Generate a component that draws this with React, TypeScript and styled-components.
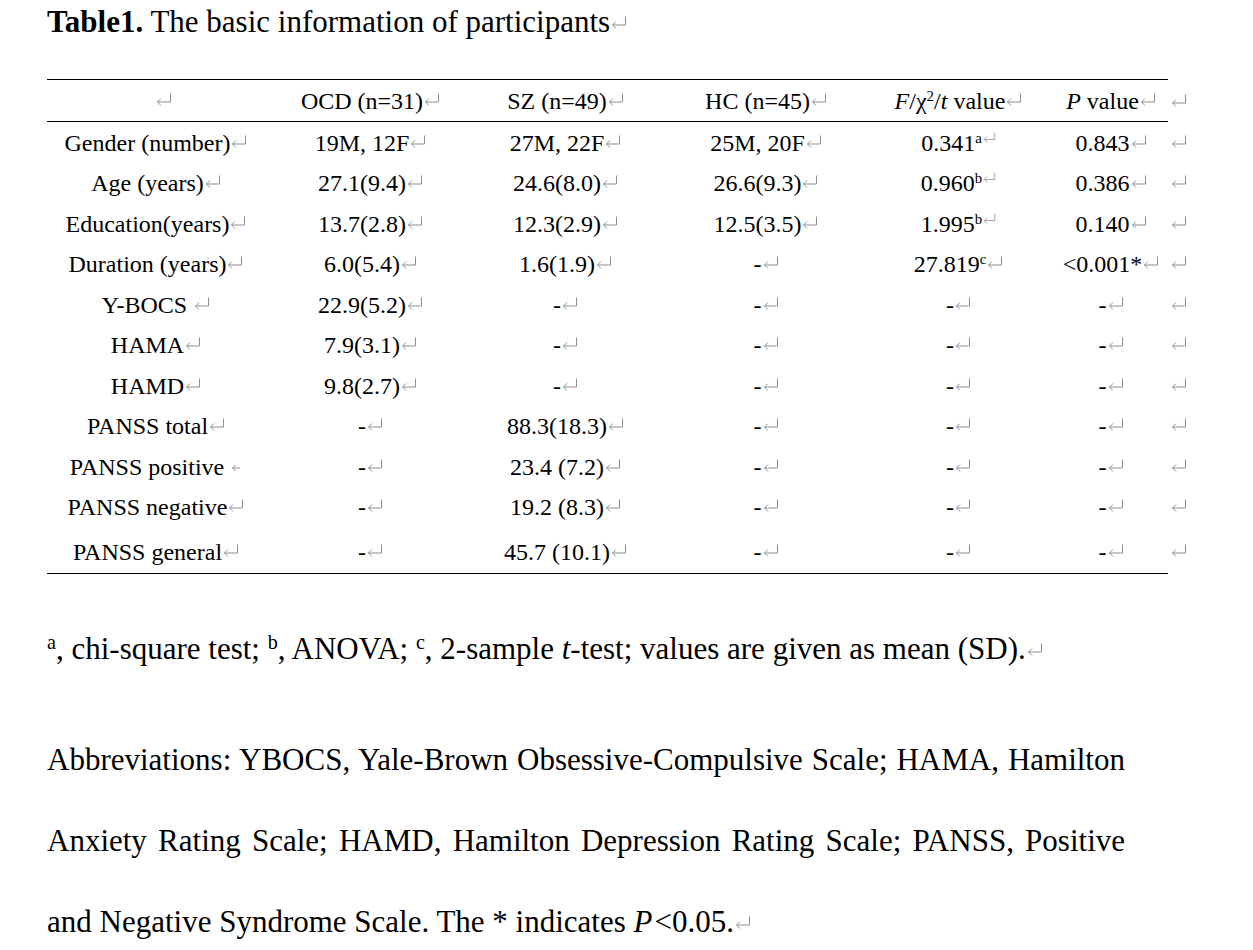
import React from 'react';
import styled, { createGlobalStyle } from 'styled-components';

type Row = {
  label: string;
  ocd: string;
  sz: string;
  hc: string;
  stat: string;
  statSup?: string;
  p: string;
  shortMark?: boolean;
};

const rows: Row[] = [
  { label: 'Gender (number)', ocd: '19M, 12F', sz: '27M, 22F', hc: '25M, 20F', stat: '0.341', statSup: 'a', p: '0.843' },
  { label: 'Age (years)', ocd: '27.1(9.4)', sz: '24.6(8.0)', hc: '26.6(9.3)', stat: '0.960', statSup: 'b', p: '0.386' },
  { label: 'Education(years)', ocd: '13.7(2.8)', sz: '12.3(2.9)', hc: '12.5(3.5)', stat: '1.995', statSup: 'b', p: '0.140' },
  { label: 'Duration (years)', ocd: '6.0(5.4)', sz: '1.6(1.9)', hc: '-', stat: '27.819', statSup: 'c', p: '<0.001*' },
  { label: 'Y-BOCS ', ocd: '22.9(5.2)', sz: '-', hc: '-', stat: '-', p: '-' },
  { label: 'HAMA', ocd: '7.9(3.1)', sz: '-', hc: '-', stat: '-', p: '-' },
  { label: 'HAMD', ocd: '9.8(2.7)', sz: '-', hc: '-', stat: '-', p: '-' },
  { label: 'PANSS total', ocd: '-', sz: '88.3(18.3)', hc: '-', stat: '-', p: '-' },
  { label: 'PANSS positive ', ocd: '-', sz: '23.4 (7.2)', hc: '-', stat: '-', p: '-', shortMark: true },
  { label: 'PANSS negative', ocd: '-', sz: '19.2 (8.3)', hc: '-', stat: '-', p: '-' },
  { label: 'PANSS general', ocd: '-', sz: '45.7 (10.1)', hc: '-', stat: '-', p: '-' },
];

const colWidths = [218, 211, 179, 222, 163, 128];

// Word's paragraph mark, drawn small and grey
const Mark = ({ short }: { short?: boolean }) =>
  short ? (
    <MarkSvg viewBox="0 0 11 13" width="11" height="13">
      <path d="M9 9 H1.5 M4.5 6 L1.5 9 L4.5 12" />
    </MarkSvg>
  ) : (
    <MarkSvg viewBox="0 0 16 13" width="16" height="13">
      <path d="M14.5 0.5 V9 H1.5 M5 5.5 L1.5 9 L5 12.5" />
    </MarkSvg>
  );

const App = () => {
  return (
    <Page>
      <GlobalStyle />
      <Title>
        <b>Table1.</b> The basic information of participants
        <Mark />
      </Title>

      <Table>
        <colgroup>
          {colWidths.map((w, i) => (
            <col key={`col_${i}`} style={{ width: w }} />
          ))}
          <col style={{ width: 30 }} />
        </colgroup>
        <thead>
          <tr>
            <HeadCell $indent>
              <Mark />
            </HeadCell>
            <HeadCell>
              OCD (n=31)
              <Mark />
            </HeadCell>
            <HeadCell>
              SZ (n=49)
              <Mark />
            </HeadCell>
            <HeadCell>
              HC (n=45)
              <Mark />
            </HeadCell>
            <HeadCell>
              <i>F</i>/χ<Sup>2</Sup>/<i>t</i> value
              <Mark />
            </HeadCell>
            <HeadCell $indent>
              <i>P</i> value
              <Mark />
            </HeadCell>
            <EndCell>
              <Mark />
            </EndCell>
          </tr>
        </thead>
        <tbody>
          {rows.map((r, i) => {
            const last = i === rows.length - 1;
            return (
              <tr key={`row_${i}`}>
                <Cell $last={last}>
                  {r.label}
                  <Mark short={r.shortMark} />
                </Cell>
                <Cell $last={last}>
                  {r.ocd}
                  <Mark />
                </Cell>
                <Cell $last={last}>
                  {r.sz}
                  <Mark />
                </Cell>
                <Cell $last={last}>
                  {r.hc}
                  <Mark />
                </Cell>
                <Cell $last={last}>
                  {r.stat}
                  {r.statSup ? (
                    <Sup>
                      {r.statSup}
                      {r.statSup !== 'c' && <Mark />}
                    </Sup>
                  ) : (
                    <Mark />
                  )}
                  {r.statSup === 'c' && <Mark />}
                </Cell>
                <Cell $last={last} $indent>
                  {r.p}
                  <Mark />
                </Cell>
                <EndCell $last={last}>
                  <Mark />
                </EndCell>
              </tr>
            );
          })}
        </tbody>
      </Table>

      <Note>
        <NoteSup>a</NoteSup>, chi-square test; <NoteSup>b</NoteSup>, ANOVA; <NoteSup>c</NoteSup>, 2-sample{' '}
        <i>t</i>-test; values are given as mean (SD).
        <Mark />
      </Note>

      <Abbrev>
        Abbreviations: YBOCS, Yale-Brown Obsessive-Compulsive Scale; HAMA, Hamilton Anxiety Rating Scale; HAMD,
        Hamilton Depression Rating Scale; PANSS, Positive and Negative Syndrome Scale. The * indicates <Em>P</Em>
        &lt;0.05.
        <Mark />
      </Abbrev>
    </Page>
  );
};

export default App;

const GlobalStyle = createGlobalStyle`
  html, body {
    margin: 0;
    padding: 0;
    background: #ffffff;
  }

  body {
    font-family: 'Liberation Serif', 'Times New Roman', serif;
    color: #000000;
  }
`;

const Page = styled.div`
  width: 1206px;
  padding-left: 47px;
  box-sizing: border-box;
`;

const MarkSvg = styled.svg`
  display: inline-block;
  vertical-align: 3px;
  margin-left: 1px;
  fill: none;
  stroke: #8f8f8f;
  stroke-width: 1;
`;

const Title = styled.div`
  font-size: 31px;
  line-height: 44px;
  height: 44px;

  b {
    font-weight: bold;
  }
`;

const Table = styled.table`
  margin-top: 35px;
  border-collapse: collapse;
  table-layout: fixed;
  width: 1151px;
  font-size: 24px;
`;

const HeadCell = styled.th<{ $indent?: boolean }>`
  font-weight: normal;
  height: 41px;
  padding: ${({ $indent }) => ($indent ? '0 0 0 14px' : '0')};
  text-align: center;
  vertical-align: middle;
  line-height: 30px;
  white-space: nowrap;
  border-top: 1px solid #000;
  border-bottom: 1px solid #000;
`;

const Cell = styled.td<{ $last?: boolean; $indent?: boolean }>`
  height: ${({ $last }) => ($last ? '47px' : '40.5px')};
  padding-top: ${({ $last }) => ($last ? '10px' : '2px')};
  padding-right: 0;
  padding-bottom: 0;
  padding-left: ${({ $indent }) => ($indent ? '14px' : '0')};
  box-sizing: border-box;
  text-align: center;
  vertical-align: ${({ $last }) => ($last ? 'top' : 'middle')};
  line-height: 30px;
  white-space: nowrap;
  border-bottom: ${({ $last }) => ($last ? '1px solid #000' : 'none')};
`;

const EndCell = styled.td<{ $last?: boolean }>`
  padding: ${({ $last }) => ($last ? '10px 0 0 2px' : '2px 0 0 2px')};
  text-align: left;
  vertical-align: ${({ $last }) => ($last ? 'top' : 'middle')};
  line-height: 30px;
  border: none;
`;

const Sup = styled.sup`
  font-size: 0.62em;
  line-height: 0;
  vertical-align: 0.55em;

  svg {
    width: 13px;
    height: 11px;
    vertical-align: 0;
  }
`;

const Note = styled.p`
  margin: 53px 0 0 0;
  font-size: 31px;
  line-height: 44px;
`;

const NoteSup = styled.sup`
  font-size: 0.65em;
  line-height: 0;
  vertical-align: 0.5em;
`;

const Abbrev = styled.p`
  margin: 48px 0 0 0;
  width: 1078px;
  font-size: 31px;
  line-height: 81px;
  text-align: justify;
`;

const Em = styled.i`
  padding-right: 2px;
`;
